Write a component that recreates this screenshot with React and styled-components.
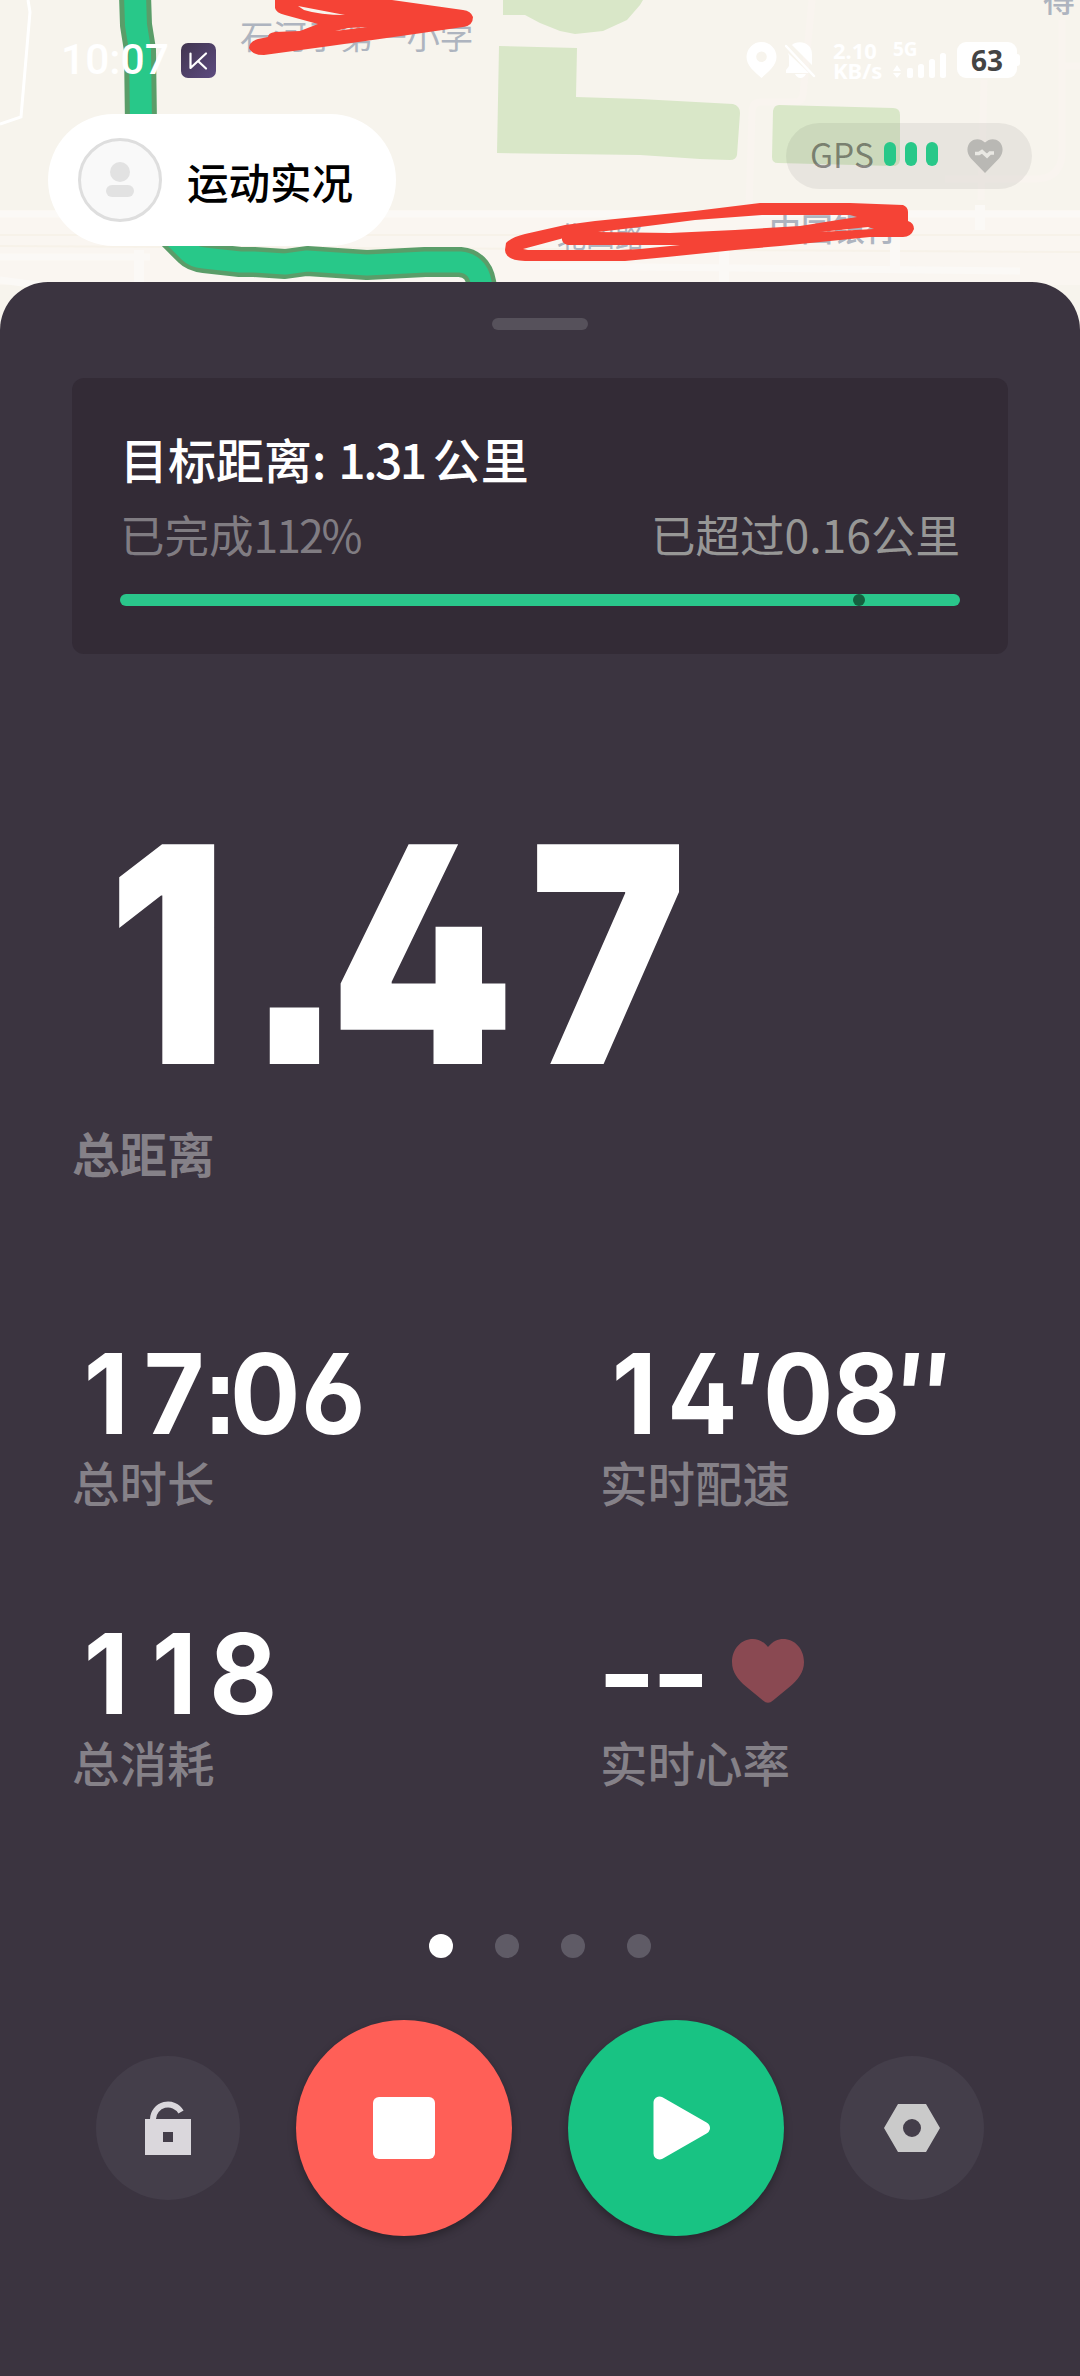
import styled, { createGlobalStyle } from "styled-components";

const GlobalStyle = createGlobalStyle`
  * {
    box-sizing: border-box;
  }
  body {
    margin: 0;
    background-color: #3b3440;
    font-family: "Noto Sans CJK SC", sans-serif;
  }
`;

const Screen = styled.div`
  width: 1080px;
  height: 2376px;
  position: relative;
  overflow: hidden;
  background-color: #f7f4ed;
  display: flex;
  flex-direction: column;
`;
const Map = styled.svg`
  position: absolute;
  top: 0;
  left: 0;
`;
const MapLabel = styled.text`
  font-size: ${(props) => props.$size}px;
  font-weight: ${(props) => props.$weight || 400};
  fill: #aeb4bf;
`;
const Header = styled.header`
  position: relative;
  height: 282px;
  padding: 42px 48px 0;
`;
const StatusBar = styled.div`
  height: 36px;
  display: flex;
  align-items: center;
  color: #ffffff;
  padding: 0 12px 0 13px;
`;
const Clock = styled.div`
  font-family: Roboto, sans-serif;
  font-size: 42.5px;
  font-weight: 500;
  width: 120px;
  line-height: 36px;
`;
const StatusRight = styled.div`
  margin-left: auto;
  display: flex;
  align-items: center;
`;
const NetSpeed = styled.div`
  font-family: "Noto Sans", sans-serif;
  font-size: 22px;
  font-weight: 700;
  line-height: 20px;
  width: 43px;
  margin: 0 17px 0 17px;
  white-space: nowrap;
`;
const Signal = styled.div`
  width: 53px;
  height: 36px;
  margin-right: 11px;
  font-family: "Noto Sans", sans-serif;
  font-size: 19px;
  font-weight: 700;
  line-height: 14px;
  position: relative;
`;
const SignalBars = styled.svg`
  position: absolute;
  top: 0;
  left: 0;
`;
const Battery = styled.div`
  width: 60px;
  height: 36px;
  border-radius: 9px;
  background-color: #ffffff;
  color: #444444;
  font-family: "Noto Sans", sans-serif;
  font-size: 28px;
  font-weight: 700;
  line-height: 36px;
  text-align: center;
`;
const BatteryTip = styled.div`
  width: 3px;
  height: 12px;
  background-color: #ffffff;
  border-radius: 0 3px 3px 0;
`;
const TopRow = styled.div`
  display: flex;
  align-items: flex-start;
  justify-content: space-between;
  margin-top: 36px;
`;
const LivePill = styled.div`
  width: 348px;
  height: 132px;
  border-radius: 66px;
  background-color: #ffffff;
  display: flex;
  align-items: center;
  padding-left: 30px;
  gap: 25px;
  color: #000000;
  font-size: 41.5px;
  font-weight: 500;
`;
const LiveText = styled.div`
  padding-top: 1px;
`;
const GpsPill = styled.div`
  width: 246px;
  height: 66px;
  margin-top: 9px;
  border-radius: 33px;
  background-color: rgba(0, 0, 0, 0.06);
  display: flex;
  align-items: center;
  padding-left: 24px;
`;
const GpsText = styled.div`
  font-size: 33.5px;
  font-weight: 400;
  line-height: 44px;
  padding-bottom: 4px;
  color: rgba(0, 0, 0, 0.42);
  width: 74px;
  white-space: nowrap;
`;
const GpsBars = styled.div`
  display: flex;
  gap: 9px;
  margin-right: 29px;
  padding-bottom: 4px;
`;
const GpsBar = styled.div`
  width: 12px;
  height: 24px;
  border-radius: 6px;
  background-color: #28c889;
`;
const Sheet = styled.main`
  position: relative;
  flex: 1;
  background-color: #3b3440;
  border-radius: 48px 48px 0 0;
  padding: 36px 72px 0;
  display: flex;
  flex-direction: column;
`;
const Handle = styled.div`
  width: 96px;
  height: 12px;
  border-radius: 6px;
  background-color: #56515b;
  align-self: center;
`;
const GoalCard = styled.section`
  height: 276px;
  margin-top: 48px;
  padding: 48px;
  border-radius: 12px;
  background-color: #332b36;
`;
const GoalTitle = styled.div`
  color: #ffffff;
  font-size: 48px;
  font-weight: 500;
  line-height: 64px;
  white-space: nowrap;
`;
const GoalNumber = styled.span`
  letter-spacing: -2.5px;
  margin: 0 8px 0 12px;
`;
const GoalInfo = styled.div`
  display: flex;
  justify-content: space-between;
  font-size: 44.5px;
  line-height: 66px;
  margin-top: 11px;
  color: #807c82;
`;
const Percent = styled.span`
  letter-spacing: -2px;
`;
const Exceeded = styled.span`
  color: #979796;
`;
const Progress = styled.div`
  height: 12px;
  margin-top: 27px;
  border-radius: 6px;
  background-color: #2ac68b;
  position: relative;
`;
const ProgressMark = styled.div`
  position: absolute;
  left: 733px;
  width: 12px;
  height: 12px;
  border-radius: 50%;
  background-color: #14603f;
`;
const Digits = styled.div`
  display: flex;
  color: #ffffff;
  font-family: Inter, sans-serif;
  font-weight: ${(props) => props.$weight || 700};
  font-feature-settings: "cv02", "cv03", "ss07", "ss08";
  font-size: ${(props) => props.$size}px;
  line-height: ${(props) => props.$height}px;
`;
// every digit takes the same cell, punctuation takes a narrower one
const Cell = styled.span`
  width: ${(props) => props.$width}em;
  display: flex;
  justify-content: center;
  font-weight: ${(props) => (props.$heavy ? 900 : "inherit")};
  transform: scaleX(${(props) => props.$stretch});
`;
const Distance = styled.div`
  height: 220px;
  margin-top: 190px;
  padding-left: 2px;
`;
const Label = styled.div`
  color: #858188;
  font-size: 47.5px;
  font-weight: ${(props) => (props.$bold ? 700 : 500)};
  line-height: 70px;
`;
const DistanceLabel = styled(Label)`
  margin-top: 54px;
`;
const Stats = styled.section`
  display: grid;
  grid-template-columns: 528px 408px;
  grid-auto-rows: 280px;
  margin-top: 158px;
`;
const StatValue = styled.div`
  height: 96px;
  margin-bottom: 5px;
  display: flex;
  align-items: center;
  gap: 24px;

  > svg {
    margin-bottom: 6px;
  }
`;
const Pager = styled.div`
  display: flex;
  justify-content: center;
  gap: 42px;
  margin-top: 28px;
`;
const Dot = styled.div`
  width: 24px;
  height: 24px;
  border-radius: 50%;
  background-color: ${(props) => (props.$active ? "#ffffff" : "#5f5b66")};
`;
const Controls = styled.div`
  display: flex;
  align-items: center;
  justify-content: center;
  gap: 56px;
  margin-top: 62px;
`;
const RoundButton = styled.button`
  width: ${(props) => (props.$large ? 216 : 144)}px;
  height: ${(props) => (props.$large ? 216 : 144)}px;
  flex: none;
  padding: 0;
  border: none;
  border-radius: 50%;
  background-color: ${(props) => props.$color || "#443e4a"};
  box-shadow: ${(props) =>
    props.$large ? "0 4px 8px rgba(0, 0, 0, 0.3)" : "none"};
  display: flex;
  align-items: center;
  justify-content: center;
`;

const stats = [
  { label: "总时长", value: "17:06" },
  { label: "实时配速", value: "14′08″" },
  { label: "总消耗", value: "118" },
  { label: "实时心率", value: "--", heart: true },
];

const cellWidths = { ":": 0.2, ".": 0.228, "′": 0.243, "″": 0.42, "-": 0.486 };
const stretches = { "-": 1.15, ".": 0.82, ":": 0.86, "′": 1, "″": 0.74 };

const NumberText = ({ value, size, height, weight, digitStretch = 0.94 }) => (
  <Digits $size={size} $height={height} $weight={weight}>
    {[...value].map((char, i) => (
      <Cell
        key={i}
        $width={cellWidths[char] || 0.6165}
        $stretch={stretches[char] || digitStretch}
        $heavy={char === "″"}
      >
        {char}
      </Cell>
    ))}
  </Digits>
);

const ROUTE_TOP = "M135 -5 L136 25 L140 50 L141 125";
const ROUTE_BOTTOM =
  "M160 220 L173 236 L189 252 Q194 257 204 258 L240 262 L254 262 L285 264 L307 261 L367 265 L425 262 L460 262 Q481 264 482 290";

const MapView = () => (
  <Map width="1080" height="340" viewBox="0 0 1080 340">
    <rect y="210" width="1080" height="75" fill="#faf6f1" />
    <g fill="none" stroke="#fbf9f6" strokeWidth="7">
      <path d="M0 214H1080M0 257H150M540 266L1020 271M0 280L60 288" />
      <path d="M0 235H1080M0 246L1080 252" stroke="#f7f2e9" strokeWidth="2" />
      <path d="M139 250V284M724 250V284M895 240V270M980 205V230" strokeWidth="10" />
    </g>
    <path d="M0 124L21 117L30 12L28 0" fill="none" stroke="#ffffff" strokeWidth="3" />
    <g fill="none" stroke="#f9f4ef" strokeWidth="7">
      <path d="M812 0L803 95Q802 102 794 102H760Q752 103 752 112L749 210" />
      <path d="M1062 20V155Q1060 179 1035 179H945M984 80L981 200M1062 66H1080" />
    </g>
    <g fill="#d9e7c8">
      <path d="M503 0V15H525L540 23L560 31L575 34L603 31L627 20L640 5L643 0Z" />
      <path d="M499 46L577 48L576 97L640 99L733 104Q740 106 740 113L737 155Q736 160 730 160L700 159L640 155L497 153Z" />
      <path d="M779 105L893 108Q900 108 900 115V160Q899 166 893 166L778 163Q772 163 772 157L773 111Q774 105 779 105Z" />
    </g>
    <MapLabel $size={33.3} x="240" y="49">石河子第一小学</MapLabel>
    <MapLabel $size={29} x="557" y="248">北四路</MapLabel>
    <MapLabel $size={32} $weight={500} x="769" y="241">中国银行</MapLabel>
    <MapLabel $size={32} $weight={500} x="1043" y="12">得</MapLabel>
    <g fill="none" strokeLinejoin="round">
      <path d={ROUTE_TOP} stroke="#5a9d69" strokeWidth="32" />
      <path d={ROUTE_BOTTOM} stroke="#5a9d69" strokeWidth="30" />
      <path d={ROUTE_TOP} stroke="#28c889" strokeWidth="22" />
      <path d={ROUTE_BOTTOM} stroke="#28c889" strokeWidth="21" />
    </g>
    <g fill="#f54336" fillRule="evenodd">
      <path
        d="M275 0V8Q276 13 285 15L318 24L300 31L275 32Q268 33 268 37L258 39Q249 42 249 48Q252 55 264 55L330 46L415 34L463 27Q473 26 473 17Q471 11 463 10L392 0Z
        M298 6L345 15Q320 15 304 10ZM335 31L348 28L367 27Z"
      />
      <path
        d="M506 243Q512 237 525 234L565 225L595 221L695 211L760 203H850L903 205Q908 207 908 212V221Q914 223 914 229Q911 237 903 237L870 237L780 246L735 250L667 257L625 261H525Q505 260 505 250Z
        M523 249L562 238.500V240Q563 244 568 245H680L640 249L620 250H528ZM598 232L640 227L695 220L762 215H850L857 217L800 226L735 230L670 233ZM820 232L868 227L874 229Z"
      />
    </g>
  </Map>
);

const AppBadge = () => (
  <svg width="35" height="35" viewBox="0 0 35 35">
    <defs>
      <linearGradient id="badge" x1="0" y1="0" x2="1" y2="1">
        <stop offset="0" stopColor="#41354f" />
        <stop offset="1" stopColor="#5d4b80" />
      </linearGradient>
    </defs>
    <rect width="35" height="35" rx="7" fill="url(#badge)" />
    <path d="M9.500 10.500V25L25 10.500M17 18L25 25.500" fill="none" stroke="#fff" strokeWidth="2.200" strokeLinecap="round" strokeLinejoin="round" />
  </svg>
);

const PinIcon = () => (
  <svg width="31" height="36" viewBox="0 0 31 36">
    <path fill="#fff" fillRule="evenodd" d="M15.500 0A15 15 0 0 0 .5 15C.5 24 9 30 15.500 36C22 30 30.500 24 30.500 15A15 15 0 0 0 15.500 0ZM15.500 9.500a5.300 5.300 0 1 1 0 10.600a5.300 5.300 0 0 1 0-10.600Z" />
  </svg>
);

const MuteIcon = () => (
  <svg width="31" height="36" viewBox="0 0 31 36">
    <path fill="#fff" d="M6.500 3.500C10-1 20-1 24 4Q27 7 27 13V23L7 3ZM3 11L24 31H1V28L4 24V14ZM10 32H21Q19 36 15.500 36T10 32Z" />
    <path d="M1 4L29 34" stroke="#fff" strokeWidth="2.500" strokeLinecap="round" />
  </svg>
);

const Avatar = () => (
  <svg width="84" height="84" viewBox="0 0 84 84">
    <circle cx="42" cy="42" r="40.500" fill="#f9f9f9" stroke="#dedede" strokeWidth="3" />
    <circle cx="42" cy="34" r="10" fill="#e2e2e2" />
    <rect x="28" y="47" width="28" height="12" rx="6" fill="#e2e2e2" />
  </svg>
);

const PulseHeart = () => (
  <svg width="36" height="34" viewBox="0 0 36 34">
    <path fill="#b9b8b4" d="M18 34L4 19.500C-1.500 13 0 6 4 2.500C8-1 14-.5 18 3.500C22-.5 28-1 32 2.500C36 6 37.500 13 32 19.500Z" />
    <path d="M8 14.500H12L15 12.500L20 17L23 14H27" fill="none" stroke="#e9e8e3" strokeWidth="3.500" />
  </svg>
);

const HeartIcon = () => (
  <svg width="72" height="64" viewBox="0 0 72 64">
    <path fill="#8a4952" d="M36 8C41 2 46 0 51 0C63 0 72 10 72 23C72 33 66 41 58 47.500L41 61.500Q36 66 31 61.500L14 47.500C6 41 0 33 0 23C0 10 9 0 21 0C26 0 31 2 36 8Z" />
  </svg>
);

const UnlockIcon = () => (
  <svg width="46" height="54" viewBox="0 0 46 54">
    <path d="M8 20V18A15 15 0 0 1 36 11" fill="none" stroke="#dad7dc" strokeWidth="6" />
    <path fill="#dad7dc" fillRule="evenodd" d="M0 18H46V54H0ZM18 31V41H28V31Z" />
  </svg>
);

const StopIcon = () => (
  <svg width="62" height="62" viewBox="0 0 62 62">
    <rect width="62" height="62" rx="6" fill="#fff" />
  </svg>
);

// the triangle sits slightly right of the button centre
const PlayIcon = () => (
  <svg width="72" height="64" viewBox="0 0 72 64">
    <path d="M19.500 6.500V57.500L64 32Z" fill="#fff" stroke="#fff" strokeWidth="12" strokeLinejoin="round" />
  </svg>
);

const NutIcon = () => (
  <svg width="56" height="48" viewBox="0 0 56 48">
    <path fill="#cacaca" fillRule="evenodd" d="M14 0H42L56 24L42 48H14L0 24ZM28 15a9 9 0 1 0 0 18a9 9 0 0 0 0-18Z" />
  </svg>
);

const App = () => {
  return (
    <Screen>
      <GlobalStyle />
      <MapView />
      <Header>
        <StatusBar>
          <Clock>10:07</Clock>
          <AppBadge />
          <StatusRight>
            <PinIcon />
            <svg width="8" height="36" />
            <MuteIcon />
            <NetSpeed>
              2.10
              <br />
              KB/s
            </NetSpeed>
            <Signal>
              5G
              <SignalBars width="53" height="36" viewBox="0 0 53 36" fill="#fff">
                <path d="M0 29L4 23L8 29ZM0 31H8L4 36Z" />
                <rect x="14" y="26" width="6" height="10" rx="2" />
                <rect x="25" y="22" width="6" height="14" rx="2.500" />
                <rect x="36" y="17" width="6" height="19" rx="2.500" />
                <rect x="47" y="11" width="6" height="25" rx="2.500" />
              </SignalBars>
            </Signal>
            <Battery>63</Battery>
            <BatteryTip />
          </StatusRight>
        </StatusBar>
        <TopRow>
          <LivePill>
            <Avatar />
            <LiveText>运动实况</LiveText>
          </LivePill>
          <GpsPill>
            <GpsText>GPS</GpsText>
            <GpsBars>
              <GpsBar />
              <GpsBar />
              <GpsBar />
            </GpsBars>
            <PulseHeart />
          </GpsPill>
        </TopRow>
      </Header>
      <Sheet>
        <Handle />
        <GoalCard>
          <GoalTitle>
            目标距离:<GoalNumber>1.31</GoalNumber>公里
          </GoalTitle>
          <GoalInfo>
            <span>
              已完成<Percent>112%</Percent>
            </span>
            <Exceeded>已超过0.16公里</Exceeded>
          </GoalInfo>
          <Progress>
            <ProgressMark />
          </Progress>
        </GoalCard>
        <Distance>
          <NumberText
            value="1.47"
            size={302}
            height={220}
            weight={900}
            digitStretch={0.87}
          />
        </Distance>
        <DistanceLabel $bold>总距离</DistanceLabel>
        <Stats>
          {stats.map((stat) => (
            <div key={stat.label}>
              <StatValue>
                <NumberText value={stat.value} size={111} height={96} />
                {stat.heart && <HeartIcon />}
              </StatValue>
              <Label>{stat.label}</Label>
            </div>
          ))}
        </Stats>
        <Pager>
          <Dot $active />
          <Dot />
          <Dot />
          <Dot />
        </Pager>
        <Controls>
          <RoundButton>
            <UnlockIcon />
          </RoundButton>
          <RoundButton $large $color="#ff5f57">
            <StopIcon />
          </RoundButton>
          <RoundButton $large $color="#18c383">
            <PlayIcon />
          </RoundButton>
          <RoundButton>
            <NutIcon />
          </RoundButton>
        </Controls>
      </Sheet>
    </Screen>
  );
};

export default App;
